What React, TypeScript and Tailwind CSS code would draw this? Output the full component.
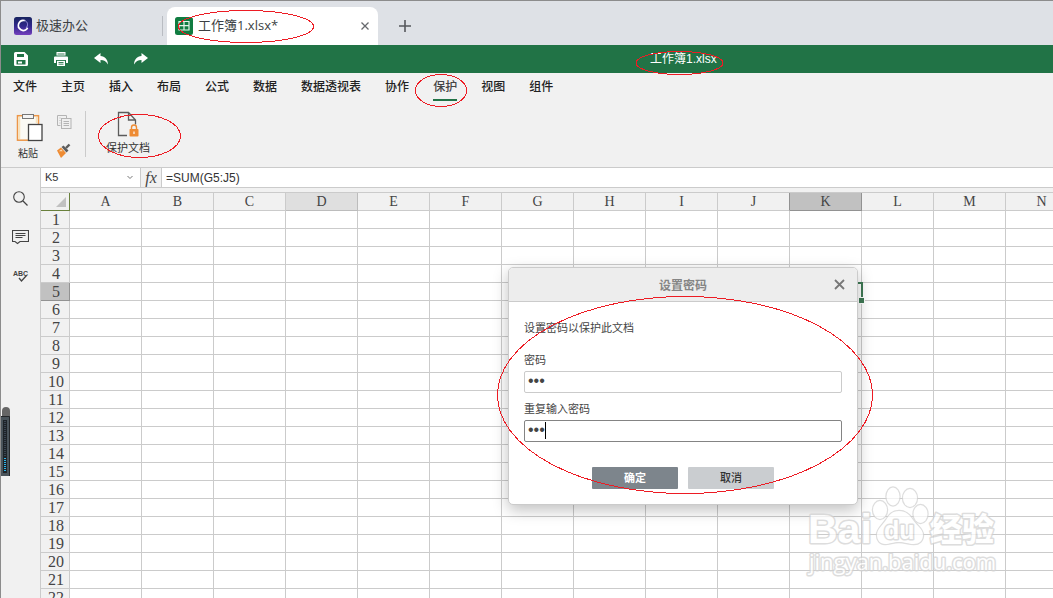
import React from "react";

const MENU = ["文件", "主页", "插入", "布局", "公式", "数据", "数据透视表", "协作", "保护", "视图", "组件"];
const COLUMNS = "ABCDEFGHIJKLMN".split("");
const ROWS = Array.from({ length: 22 }, (_, i) => i + 1);

function TabStrip() {
  return (
    <header className="flex h-11 shrink-0 items-end bg-[#dee1e6] pl-3 font-['Open_Sans','Noto_Sans_CJK_SC',sans-serif] text-[13px] text-[#3c3f43]">
      <a href="#home" className="flex h-[38px] w-[149px] items-center gap-[3px]">
        <svg width="20" height="20" viewBox="0 0 20 20" aria-hidden="true">
          <defs>
            <linearGradient id="brand" x1="0" y1="0" x2="0" y2="1">
              <stop offset="0" stopColor="#17245f" />
              <stop offset="0.5" stopColor="#30278c" />
              <stop offset="1" stopColor="#7440bd" />
            </linearGradient>
          </defs>
          <rect x="1" y="1" width="18" height="18" rx="2.5" fill="url(#brand)" />
          <path d="M11.500 4.500A5 5 0 1 0 14.300 12.500" stroke="#fff" strokeWidth="1.700" strokeLinecap="round" fill="none" />
          <path d="M11.500 4.500c3.400 1 4 5 1.500 7.500" stroke="#9d93e0" strokeWidth="1" fill="none" />
        </svg>
        <span>极速办公</span>
      </a>
      <span className="mb-[9px] h-5 w-px bg-[#b9bcc2]" />
      <div className="ml-1 flex h-[38px] w-[211px] items-center rounded-t-lg bg-white pr-1 pl-2">
        <svg width="18" height="18" viewBox="0 0 18 18" aria-hidden="true">
          <rect width="18" height="18" rx="2.5" fill="#107c41" />
          <path d="M4 4.500h10v8.500H4zM9 4.500V13M4 8.700h10" stroke="#e6f3ea" strokeWidth="1.200" fill="none" />
        </svg>
        <span className="ml-[5px] flex-1">工作簿1.xlsx*</span>
        <button aria-label="关闭标签" className="p-1">
          <svg width="10" height="10" viewBox="0 0 10 10" aria-hidden="true">
            <path d="M1.500 1.500l7 7M8.500 1.500l-7 7" stroke="#66696d" strokeWidth="1.300" />
          </svg>
        </button>
      </div>
      <button aria-label="新建标签" className="mb-3 ml-5">
        <svg width="14" height="14" viewBox="0 0 14 14" aria-hidden="true">
          <path d="M7 1v12M1 7h12" stroke="#55585c" strokeWidth="1.600" />
        </svg>
      </button>
    </header>
  );
}

function QuickBar() {
  return (
    <div className="grid h-7 shrink-0 grid-cols-[1fr_auto_1fr] items-center bg-[#217346] text-white">
      <div className="flex items-center gap-6 pl-3">
        <button aria-label="保存">
          <svg width="16" height="16" viewBox="0 0 16 16" aria-hidden="true">
            <path fillRule="evenodd" fill="#fff" d="M2.500 1h9L15 4.500v9a1.500 1.500 0 0 1-1.500 1.500h-11A1.500 1.500 0 0 1 1 13.500v-11A1.500 1.500 0 0 1 2.500 1zM4 3v3h7V3zM3.500 9v4.500h9V9z" />
            <path d="M5 10.500h4v2H5z" fill="#fff" />
          </svg>
        </button>
        <button aria-label="打印">
          <svg width="16" height="16" viewBox="0 0 16 16" aria-hidden="true">
            <path d="M3.500 1h9v3.500h-9zM2 5.500h12a1 1 0 0 1 1 1V12h-2V9H3v3H1V6.500a1 1 0 0 1 1-1z" fill="#fff" />
            <path d="M4 8.500h8V15H4z" fill="#fff" />
            <path d="M4 9.500h8M5.500 11.500h5M5.500 13.200h5M4.500 3h7" stroke="#217346" strokeWidth=".9" />
          </svg>
        </button>
        <button aria-label="撤销">
          <svg width="16" height="16" viewBox="0 0 16 16" aria-hidden="true">
            <path d="M1 7l6.500-5v3C12 5.300 14.800 8.500 15 13.500 13.200 10.300 11 9 7.500 9v3z" fill="#fff" />
          </svg>
        </button>
        <button aria-label="重做">
          <svg width="16" height="16" viewBox="0 0 16 16" aria-hidden="true">
            <path d="M15 7L8.500 2v3C4 5.300 1.200 8.500 1 13.500 2.800 10.300 5 9 8.500 9v3z" fill="#fff" />
          </svg>
        </button>
      </div>
      <span />
      <span className="pl-[123px] text-xs">工作簿1.xlsx</span>
    </div>
  );
}

function Menu() {
  return (
    <nav className="flex h-7 shrink-0 items-start gap-6 pl-3 text-xs font-medium text-[#222]">
      {MENU.map((name) => (
        <a
          key={name}
          href={"#" + name}
          className={
            name === "保护"
              ? "h-7 border-b-2 border-[#217346] pt-[6px] text-[#444]"
              : "h-7 border-b-2 border-transparent pt-[6px]"
          }
        >
          {name}
        </a>
      ))}
    </nav>
  );
}

function Ribbon() {
  return (
    <div className="flex h-[66px] shrink-0 items-start text-[#333]">
      <button className="ml-[15px] mt-3 flex w-7 flex-col items-center gap-[3px] text-[10px] leading-4">
        <svg width="28" height="30" viewBox="0 0 28 30" aria-hidden="true">
          <rect x="1.500" y="2.700" width="21" height="24.500" fill="#fbfaf4" stroke="#ec9648" strokeWidth="1.500" />
          <path d="M3.500 4v22M20.500 4v6" stroke="#f6e4bd" strokeWidth="1.500" />
          <rect x="6.500" y="1.500" width="11" height="4" fill="#f4f4f4" stroke="#777" />
          <rect x="12.500" y="11.500" width="13.500" height="16" fill="#fff" stroke="#444" strokeWidth="1.300" />
        </svg>
        <span className="pr-1">粘贴</span>
      </button>
      <div className="ml-3 mt-[13px] flex flex-col gap-3">
        <button aria-label="复制">
          <svg width="17" height="17" viewBox="0 0 17 17" aria-hidden="true">
            <path d="M4.500 11.500h-3v-10h9V4" stroke="#b4b4b4" fill="none" />
            <path d="M3.500 4h1M3.500 6.500h1M3.500 9h1" stroke="#b4b4b4" />
            <rect x="5.500" y="4.500" width="9.500" height="10" fill="#efefef" stroke="#b4b4b4" />
            <path d="M7.500 7.500h5.500M7.500 9.500h5.500M7.500 11.500h5.500" stroke="#b4b4b4" />
          </svg>
        </button>
        <button aria-label="格式刷">
          <svg width="16" height="16" viewBox="0 0 16 16" aria-hidden="true">
            <path d="M1 7.500L5 4.500l5 5.500-5 5z" fill="#ee8b33" />
            <path d="M2.800 8.200l2.500-1.700 1.500 1.700z" fill="#fbd9b0" />
            <path d="M5.500 4l2-1.500 5 5-2 2z" fill="#5d5d5d" />
            <path d="M10 5l3.500-3.500" stroke="#5d5d5d" strokeWidth="2.400" />
          </svg>
        </button>
      </div>
      <span className="ml-3 mt-[10px] h-[46px] w-px bg-[#cbcbcb]" />
      <button className="ml-5 mt-[10px] flex flex-col items-center text-[11px] leading-[18px]">
        <svg width="26" height="28" viewBox="0 0 26 28" aria-hidden="true">
          <path d="M12 24.500H3.500v-23h10l7 7.500v4.500M13.500 1.500V9h7" stroke="#5b5b5b" strokeWidth="1.300" fill="none" />
          <path d="M16.500 18v-1.500a2.500 2.500 0 0 1 5 0V18" stroke="#ee8b33" strokeWidth="1.400" fill="none" />
          <rect x="14.500" y="18" width="9" height="7.500" rx=".8" fill="#ee8b33" />
          <path d="M19 20.500v2.500" stroke="#fff" strokeWidth="1.200" />
        </svg>
        <span>保护文档</span>
      </button>
    </div>
  );
}

function SideBar() {
  return (
    <aside className="flex w-[39px] shrink-0 flex-col items-center gap-[22px] pt-[22px]">
      <button aria-label="搜索">
        <svg width="17" height="17" viewBox="0 0 17 17" aria-hidden="true">
          <circle cx="7" cy="7" r="5.300" fill="none" stroke="#444" strokeWidth="1.100" />
          <path d="M11 11l4.500 4.500" stroke="#444" strokeWidth="1.200" />
        </svg>
      </button>
      <button aria-label="批注">
        <svg width="17" height="16" viewBox="0 0 17 16" aria-hidden="true">
          <path d="M.5 1.500h16v11H8l-2.500 2-2.500-2H.5z" fill="none" stroke="#444" strokeWidth="1.100" />
          <path d="M3.500 4.500h10M3.500 6.500h10M3.500 8.500h7" stroke="#444" />
        </svg>
      </button>
      <button aria-label="拼写检查">
        <svg width="17" height="16" viewBox="0 0 17 16" aria-hidden="true">
          <text x="1" y="9" fontSize="7" fontWeight="700" fill="#444" fontFamily="Liberation Sans, sans-serif">ABC</text>
          <path d="M7 11l2.500 3 5-5.500" fill="none" stroke="#444" strokeWidth="1.300" />
        </svg>
      </button>
    </aside>
  );
}

function FormulaBar() {
  return (
    <div className="flex h-5 shrink-0 border-b border-[#cbcbcb] bg-white text-[#333]">
      <div className="flex w-[100px] shrink-0 items-center border-r border-[#cbcbcb] pr-[7px] pl-1">
        <input aria-label="名称框" defaultValue="K5" className="w-full min-w-0 bg-transparent text-[11px] outline-none" />
        <svg width="6" height="5" viewBox="0 0 6 5" className="shrink-0" aria-hidden="true">
          <path d="M.5 1L3 3.500 5.500 1" fill="none" stroke="#777" />
        </svg>
      </div>
      <button className="w-[21px] shrink-0 border-r border-[#cbcbcb] bg-[#f1f1f1] font-['Liberation_Serif',serif] text-base leading-4 italic text-[#444]">
        fx
      </button>
      <input aria-label="编辑栏" defaultValue="=SUM(G5:J5)" className="min-w-0 flex-1 pl-1 text-xs outline-none" />
    </div>
  );
}

function headerTone(name: string) {
  if (name === "K") return "border-[#929292] bg-[#c1c1c1]";
  if (name === "J") return "border-[#cbcbcb] border-r-[#929292]";
  if (name === "D") return "border-[#bcbcbc] bg-[#dfdfdf]";
  return "border-[#cbcbcb]";
}

function Sheet() {
  return (
    <div className="min-h-0 flex-1 overflow-hidden pt-1">
      <table className="w-[1037px] table-fixed border-separate border-spacing-0 border-t border-[#cbcbcb] bg-white font-['Liberation_Serif',serif] text-base leading-4 text-[#444]">
        <thead>
          <tr className="bg-[#f1f1f1]">
            <th aria-label="全选" className="h-[18px] w-[29px] border-r border-b border-[#69803c] p-0">
              <svg width="12" height="12" viewBox="0 0 12 12" className="ml-auto mr-[2px]" aria-hidden="true">
                <path d="M11 1v10H1z" fill="#c1c1c1" />
              </svg>
            </th>
            {COLUMNS.map((name) => (
              <th key={name} className={"h-[18px] w-[72px] border-r border-b p-0 text-sm leading-4 font-normal " + headerTone(name)}>
                {name}
              </th>
            ))}
          </tr>
        </thead>
        <tbody>
          {ROWS.map((row) => (
            <tr key={row}>
              <th
                className={
                  row === 5
                    ? "h-[18px] border-r border-b border-[#929292] bg-[#c1c1c1] p-0 pl-0.5 font-normal"
                    : "h-[18px] border-r border-b border-[#cbcbcb] bg-[#f1f1f1] p-0 pl-0.5 font-normal"
                }
              >
                {row}
              </th>
              {COLUMNS.map((name) => (
                <td key={name} className="border-r border-b border-[#cbcbcb] p-0">
                  {row === 5 && name === "K" && (
                    <span className="relative z-10 -m-0.5 block h-5 border-2 border-[#3f7a55]">
                      <span className="absolute -right-1 -bottom-1 size-[7px] border border-white bg-[#3f7a55]" />
                    </span>
                  )}
                </td>
              ))}
            </tr>
          ))}
        </tbody>
      </table>
    </div>
  );
}

function PasswordDialog() {
  return (
    <form
      role="dialog"
      aria-labelledby="dialog-title"
      className="absolute top-[266px] left-[507px] z-20 w-[350px] rounded-[5px] border border-[#cbcbcb] bg-white text-[11px] leading-4 text-[#444] shadow-[0_5px_15px_rgba(0,0,0,0.25)]"
    >
      <div className="flex h-[34px] items-center justify-end rounded-t-[4px] border-b border-[#cbcbcb] bg-[#ededed] pr-3">
        <h2 id="dialog-title" className="flex-1 pt-0.5 pl-[23px] text-center text-xs font-bold text-[#858585]">设置密码</h2>
        <button type="button" aria-label="关闭">
          <svg width="11" height="11" viewBox="0 0 11 11" aria-hidden="true">
            <path d="M1 1l9 9M10 1l-9 9" stroke="#777" strokeWidth="1.800" />
          </svg>
        </button>
      </div>
      <div className="flex flex-col px-[15px] pt-[18px] pb-[15px]">
        <p className="mb-4">设置密码以保护此文档</p>
        <label htmlFor="pwd" className="mb-[3px]">密码</label>
        <input
          id="pwd"
          type="password"
          defaultValue="123"
          className="mb-2 h-[22px] rounded-[2px] border border-[#cbcbcb] bg-white px-[3px] pb-0.5 font-['Liberation_Sans'] text-base leading-4 text-[#444] outline-none"
        />
        <label htmlFor="pwd2" className="mb-[3px]">重复输入密码</label>
        <div className="relative flex">
          <input
            id="pwd2"
            type="password"
            defaultValue="123"
            className="h-[22px] flex-1 rounded-[2px] border border-[#848484] bg-white px-[3px] pb-0.5 font-['Liberation_Sans'] text-base leading-4 text-[#444] outline-none"
          />
          <span className="absolute top-[2px] left-[21px] h-[17px] w-px bg-black" />
        </div>
        <div className="mt-[25px] flex justify-center gap-[10px] text-[11px] font-bold">
          <button type="button" className="h-[22px] w-[86px] rounded-[1px] bg-[#7d858c] text-white">确定</button>
          <button type="button" className="h-[22px] w-[86px] rounded-[1px] bg-[#cacdd0] font-medium text-[#333]">取消</button>
        </div>
      </div>
    </form>
  );
}

function Watermark() {
  return (
    <svg width="210" height="100" viewBox="0 0 210 100" className="pointer-events-none absolute top-[479px] left-[799px] z-30" aria-hidden="true">
      <g fill="#fff" stroke="#d2d2d2" strokeWidth="3" strokeLinejoin="round" paintOrder="stroke" opacity=".75">
        <text x="8" y="63" fontSize="41" fontWeight="700" fontFamily="Liberation Sans, sans-serif">Bai</text>
        <g strokeWidth="2.400">
          <ellipse cx="80" cy="30" rx="7" ry="9" />
          <ellipse cx="93" cy="16.500" rx="6.500" ry="9" />
          <ellipse cx="110" cy="18" rx="7" ry="9" />
          <ellipse cx="120.500" cy="34" rx="7" ry="9" />
          <path d="M99 31c7 0 11 4 14 9 4 6 10 9 10 15 0 6-4 9-9 9-6 0-9-2-15-2s-9 2-14 2c-5 0-8-4-8-9 0-6 5-9 9-15 3-5 6-9 13-9z" />
        </g>
        <text x="84" y="59" fontSize="25" fontWeight="700" fontFamily="Liberation Sans, sans-serif">du</text>
        <text x="130" y="61" fontSize="32" fontWeight="900" fontFamily="Noto Sans CJK SC, sans-serif">经验</text>
        <text x="9" y="90" fontSize="22" fontFamily="Open Sans, sans-serif">jingyan.baidu.com</text>
      </g>
    </svg>
  );
}

function VolumeGauge() {
  return (
    <svg width="10" height="70" viewBox="0 0 10 70" className="absolute top-[406px] left-0" aria-hidden="true">
      <path d="M1 10V4a4 4 0 0 1 8 0v6z" fill="#666" />
      <rect x="0" y="9" width="9" height="60" fill="#4a545b" />
      <path d="M0 9.500h8.500V69" fill="none" stroke="#24272a" />
      <rect x="2" y="13" width="4" height="53" fill="#1d2328" />
      <path d="M4 14v36" stroke="#3a4450" strokeWidth="2" strokeDasharray="1 1" />
      <path d="M4 51v14" stroke="#2fb4ea" strokeWidth="2" strokeDasharray="1 1" />
    </svg>
  );
}

function Annotations() {
  return (
    <svg className="pointer-events-none absolute inset-0 z-30 h-full w-full" aria-hidden="true">
      <g fill="none" stroke="#ed1c24" shapeRendering="crispEdges">
        <ellipse cx="245" cy="25.500" rx="67.500" ry="16" />
        <ellipse cx="678.500" cy="62" rx="43.500" ry="11.500" />
        <ellipse cx="440" cy="89.500" rx="25.500" ry="16" />
        <ellipse cx="138.500" cy="135" rx="41" ry="21.500" />
        <ellipse cx="684" cy="394" rx="187.500" ry="98.500" />
      </g>
    </svg>
  );
}

export default function App() {
  return (
    <div className="relative flex h-screen flex-col overflow-hidden border-t border-l border-[#8c8c8c] bg-[#f1f1f1] font-['Liberation_Sans','Noto_Sans_CJK_SC',sans-serif]">
      <TabStrip />
      <QuickBar />
      <Menu />
      <Ribbon />
      <div className="flex min-h-0 flex-1 border-t border-[#cbcbcb]">
        <SideBar />
        <main className="flex min-w-0 flex-1 flex-col border-l border-[#cbcbcb]">
          <FormulaBar />
          <Sheet />
        </main>
      </div>
      <VolumeGauge />
      <PasswordDialog />
      <Watermark />
      <Annotations />
    </div>
  );
}
